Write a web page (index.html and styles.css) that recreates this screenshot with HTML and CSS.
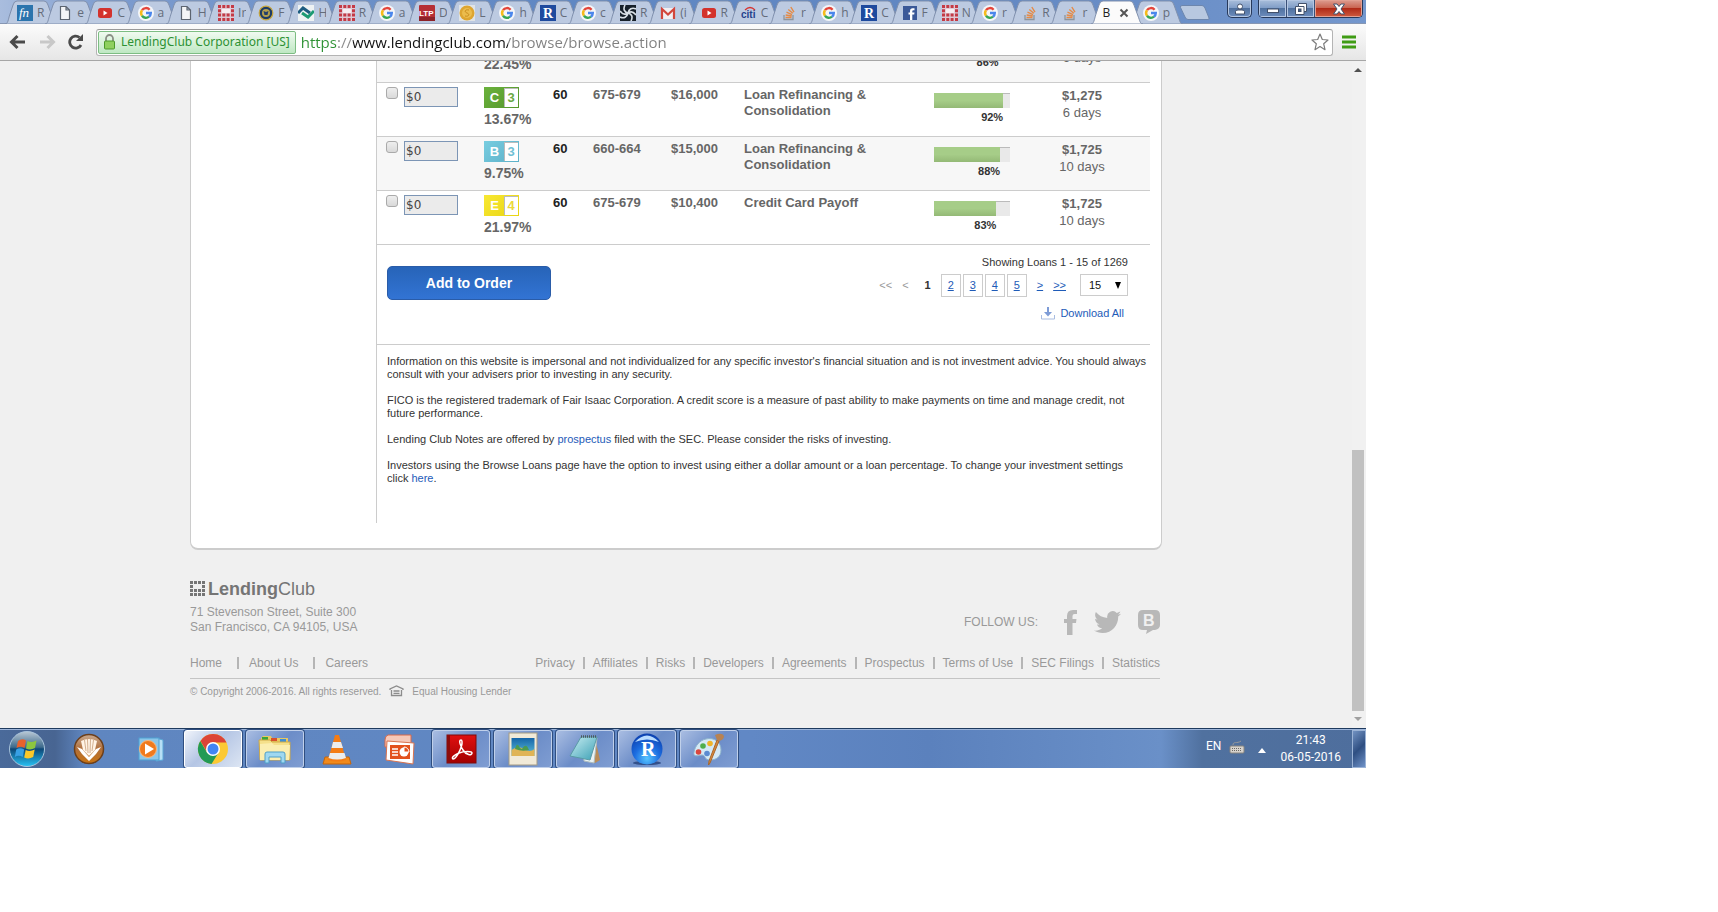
FILE: index.html
```html
<!DOCTYPE html>
<html lang="en">
<head>
<meta charset="utf-8">
<meta name="viewport" content="width=device-width, initial-scale=1">
<title>Browse Loans</title>
<link rel="stylesheet" href="styles.css">
</head>
<body>
<svg class="sprite" width="0" height="0" aria-hidden="true">
  <defs>
    <linearGradient id="orb" x1="0" y1="0" x2="0" y2="1"><stop offset="0" stop-color="#b9c8d4"/><stop offset=".45" stop-color="#3d6a8c"/><stop offset=".5" stop-color="#0d4777"/><stop offset="1" stop-color="#27c3f5"/></linearGradient>
    <linearGradient id="bronze" x1="0" y1="0" x2="0" y2="1"><stop offset="0" stop-color="#c9ab92"/><stop offset=".5" stop-color="#b06f3b"/><stop offset="1" stop-color="#c9730f"/></linearGradient>
    <linearGradient id="redbook" x1="0" y1="0" x2="0" y2="1"><stop offset="0" stop-color="#e01010"/><stop offset="1" stop-color="#a30000"/></linearGradient>
    <radialGradient id="blueball" cx=".5" cy=".8" r=".8"><stop offset="0" stop-color="#58c6ff"/><stop offset=".5" stop-color="#1c6de0"/><stop offset="1" stop-color="#0c3fae"/></radialGradient>
    <linearGradient id="pad" x1="0" y1="0" x2="1" y2="1"><stop offset="0" stop-color="#c9eef2"/><stop offset="1" stop-color="#3a9fb4"/></linearGradient>
    <linearGradient id="sky" x1="0" y1="0" x2="0" y2="1"><stop offset="0" stop-color="#1565a8"/><stop offset="1" stop-color="#5fc0dc"/></linearGradient>
  </defs>
</svg>
<svg class="symbols" aria-hidden="true">
  <symbol id="tab-shape" viewBox="0 0 52 24"><path d="M0 24C3 24 3 20 5 14L8 5Q9 1 12 1H39Q42 1 43 5L47 16C49 21 49 24 52 24Z"/></symbol>
  <symbol id="i-google" viewBox="0 0 16 16"><circle cx="8" cy="8" r="8" fill="#f4f6f9"/><g fill="none" stroke-width="2.4"><path d="M4 5.2A4.8 4.8 0 0 1 11.6 4.7" stroke="#e4453a"/><path d="M4 5.2A4.9 4.9 0 0 0 4 10.8" stroke="#f6bb1b"/><path d="M4 10.8A4.8 4.8 0 0 0 11 11.7" stroke="#38a655"/><path d="M8 8H12.8A4.8 4.8 0 0 1 11 11.7" stroke="#4a86ec"/></g></symbol>
  <symbol id="i-doc" viewBox="0 0 16 16"><path d="M3.500 1.500H9L12.500 5V14.500H3.500ZM9 1.500V5H12.500" fill="#f4f5f7" stroke="#5c6470" stroke-width="1.200"/></symbol>
  <symbol id="i-youtube" viewBox="0 0 16 16"><rect x="1" y="3" width="14" height="10" rx="2.500" fill="#d3322c"/><path d="M6.500 5.500V10.500L10.500 8Z" fill="#fff"/></symbol>
  <symbol id="i-dots" viewBox="0 0 16 16"><rect x="0" y="0" width="16" height="16" fill="#dfc9d4"/><g fill="#c33a45"><path d="M0 0h3v3H0zM4.300 0h3v3h-3zM8.600 0h3v3h-3zM13 0h3v3h-3zM0 4.300h3v3H0zM13 4.300h3v3h-3zM0 8.600h3v3H0zM4.300 8.600h3v3h-3zM8.600 8.600h3v3h-3zM13 8.600h3v3h-3zM0 13h3v3H0zM4.300 13h3v3h-3zM8.600 13h3v3h-3zM13 13h3v3h-3z"/></g><rect x="3.800" y="4" width="8.500" height="4" fill="#f6edf0"/></symbol>
  <symbol id="i-fn" viewBox="0 0 16 16"><rect width="16" height="16" fill="#2b74ad"/><text x="2" y="12" font-family="Liberation Serif, serif" font-style="italic" font-size="13" fill="#fff">fn</text></symbol>
  <symbol id="i-seal" viewBox="0 0 16 16"><circle cx="8" cy="8" r="6.800" fill="#1d3c66" stroke="#c9a63a" stroke-width="1.200"/><circle cx="8" cy="8" r="4" fill="#b5a14e"/><path d="M5.500 6L8 7L10.500 6L9.500 10H6.500Z" fill="#24406b"/></symbol>
  <symbol id="i-waves" viewBox="0 0 16 16"><rect width="16" height="16" fill="#eef2f3"/><path d="M0 8L5 3L12 8" fill="none" stroke="#1d5c80" stroke-width="3"/><path d="M4 8L10 12L16 6" fill="none" stroke="#1c9a73" stroke-width="3"/></symbol>
  <symbol id="i-ltp" viewBox="0 0 16 16"><rect width="16" height="16" rx="1" fill="#b52f35"/><rect y="12" width="16" height="4" fill="#8d2228"/><text x="0" y="11" font-family="Liberation Sans, sans-serif" font-weight="bold" font-size="8" fill="#fff">LTP</text></symbol>
  <symbol id="i-coin" viewBox="0 0 16 16"><rect width="16" height="16" fill="#dfe3e6"/><circle cx="8" cy="8" r="7.500" fill="#dda531"/><circle cx="8" cy="8" r="5" fill="#ebbc4d"/><path d="M10 5C6 4 5 7 8 8S10 12 6 11" fill="none" stroke="#c98c1d"/></symbol>
  <symbol id="i-r" viewBox="0 0 16 16"><rect width="16" height="16" fill="#1e4a9e"/><text x="3" y="13" font-family="Liberation Serif, serif" font-weight="bold" font-size="14" fill="#fff">R</text></symbol>
  <symbol id="i-spiral" viewBox="0 0 16 16"><rect width="16" height="16" fill="#16202a"/><g fill="none" stroke="#d9e0e6" stroke-width="1.600"><path d="M8 8C4 7 3 4 5 0M8 8C9 4 12 2 16 4M8 8C12 9 13 12 11 16M8 8C7 12 4 14 0 12M8 8C5 10 2 9 0 6M8 8C11 6 14 7 16 10"/></g></symbol>
  <symbol id="i-gmail" viewBox="0 0 16 16"><rect x="1" y="3" width="14" height="11" fill="#f1eff2"/><path d="M2 14V4L8 9.500L14 4V14" fill="none" stroke="#d2463c" stroke-width="2.200"/></symbol>
  <symbol id="i-citi" viewBox="0 0 16 16"><text x="0" y="13" font-family="Liberation Sans, sans-serif" font-weight="bold" font-size="10" fill="#24418c">citi</text><path d="M4 5Q9 0 14 5" fill="none" stroke="#d7322e" stroke-width="1.200"/></symbol>
  <symbol id="i-stack" viewBox="0 0 16 16"><path d="M3 10V14.500H12V10" fill="none" stroke="#8e959c" stroke-width="1.300"/><path d="M4.500 12.500H10.500M4.700 10L10.700 11M5.500 7.200L11 9.600M7.300 4.500L11.800 8.300M9.800 2L13 7.200" stroke="#e58a45" stroke-width="1.400"/></symbol>
  <symbol id="i-facebook" viewBox="0 0 16 16"><rect x="1" y="1" width="14" height="14" fill="#3b5998"/><path d="M8 15V9.500H6.500V7.500H8V6Q8 3.200 10.700 3.200H12.500V5.300H11.300Q10.300 5.300 10.300 6.300V7.500H12.500L12.200 9.500H10.300V15Z" fill="#fff"/></symbol>
</svg>

<div class="desktop">
  <header class="browser">
    <div class="strip">
      <ul class="tabs">
        <li><button class="tab"><svg class="shape"><use href="#tab-shape"/></svg><svg class="fav"><use href="#i-fn"/></svg><span>R</span></button></li>
        <li><button class="tab"><svg class="shape"><use href="#tab-shape"/></svg><svg class="fav"><use href="#i-doc"/></svg><span>e</span></button></li>
        <li><button class="tab"><svg class="shape"><use href="#tab-shape"/></svg><svg class="fav"><use href="#i-youtube"/></svg><span>C</span></button></li>
        <li><button class="tab"><svg class="shape"><use href="#tab-shape"/></svg><svg class="fav"><use href="#i-google"/></svg><span>a</span></button></li>
        <li><button class="tab"><svg class="shape"><use href="#tab-shape"/></svg><svg class="fav"><use href="#i-doc"/></svg><span>H</span></button></li>
        <li><button class="tab"><svg class="shape"><use href="#tab-shape"/></svg><svg class="fav"><use href="#i-dots"/></svg><span>Ir</span></button></li>
        <li><button class="tab"><svg class="shape"><use href="#tab-shape"/></svg><svg class="fav"><use href="#i-seal"/></svg><span>F</span></button></li>
        <li><button class="tab"><svg class="shape"><use href="#tab-shape"/></svg><svg class="fav"><use href="#i-waves"/></svg><span>H</span></button></li>
        <li><button class="tab"><svg class="shape"><use href="#tab-shape"/></svg><svg class="fav"><use href="#i-dots"/></svg><span>R</span></button></li>
        <li><button class="tab"><svg class="shape"><use href="#tab-shape"/></svg><svg class="fav"><use href="#i-google"/></svg><span>a</span></button></li>
        <li><button class="tab"><svg class="shape"><use href="#tab-shape"/></svg><svg class="fav"><use href="#i-ltp"/></svg><span>D</span></button></li>
        <li><button class="tab"><svg class="shape"><use href="#tab-shape"/></svg><svg class="fav"><use href="#i-coin"/></svg><span>L</span></button></li>
        <li><button class="tab"><svg class="shape"><use href="#tab-shape"/></svg><svg class="fav"><use href="#i-google"/></svg><span>h</span></button></li>
        <li><button class="tab"><svg class="shape"><use href="#tab-shape"/></svg><svg class="fav"><use href="#i-r"/></svg><span>C</span></button></li>
        <li><button class="tab"><svg class="shape"><use href="#tab-shape"/></svg><svg class="fav"><use href="#i-google"/></svg><span>c</span></button></li>
        <li><button class="tab"><svg class="shape"><use href="#tab-shape"/></svg><svg class="fav"><use href="#i-spiral"/></svg><span>R</span></button></li>
        <li><button class="tab"><svg class="shape"><use href="#tab-shape"/></svg><svg class="fav"><use href="#i-gmail"/></svg><span>(i</span></button></li>
        <li><button class="tab"><svg class="shape"><use href="#tab-shape"/></svg><svg class="fav"><use href="#i-youtube"/></svg><span>R</span></button></li>
        <li><button class="tab"><svg class="shape"><use href="#tab-shape"/></svg><svg class="fav"><use href="#i-citi"/></svg><span>C</span></button></li>
        <li><button class="tab"><svg class="shape"><use href="#tab-shape"/></svg><svg class="fav"><use href="#i-stack"/></svg><span>r</span></button></li>
        <li><button class="tab"><svg class="shape"><use href="#tab-shape"/></svg><svg class="fav"><use href="#i-google"/></svg><span>h</span></button></li>
        <li><button class="tab"><svg class="shape"><use href="#tab-shape"/></svg><svg class="fav"><use href="#i-r"/></svg><span>C</span></button></li>
        <li><button class="tab"><svg class="shape"><use href="#tab-shape"/></svg><svg class="fav"><use href="#i-facebook"/></svg><span>F</span></button></li>
        <li><button class="tab"><svg class="shape"><use href="#tab-shape"/></svg><svg class="fav"><use href="#i-dots"/></svg><span>N</span></button></li>
        <li><button class="tab"><svg class="shape"><use href="#tab-shape"/></svg><svg class="fav"><use href="#i-google"/></svg><span>r</span></button></li>
        <li><button class="tab"><svg class="shape"><use href="#tab-shape"/></svg><svg class="fav"><use href="#i-stack"/></svg><span>R</span></button></li>
        <li><button class="tab"><svg class="shape"><use href="#tab-shape"/></svg><svg class="fav"><use href="#i-stack"/></svg><span>r</span></button></li>
        <li class="active"><button class="tab"><svg class="shape"><use href="#tab-shape"/></svg><span>B</span><svg class="close" viewBox="0 0 10 10"><path d="M1.500 1.500L8.500 8.500M8.500 1.500L1.500 8.500"/></svg></button></li>
        <li><button class="tab"><svg class="shape"><use href="#tab-shape"/></svg><svg class="fav"><use href="#i-google"/></svg><span>p</span></button></li>
      </ul>
      <button class="newtab" aria-label="New tab"><svg width="32" height="16" viewBox="0 0 32 16"><path d="M1.500 2.500Q1 .5 3 .5H23Q25 .5 26 3L30 13Q30.500 14.500 29 14.500H9Q7 14.500 6 12Z" fill="#b8c8e0" stroke="#6d86ad"/></svg></button>
      <div class="window-buttons">
        <button class="wb user" aria-label="User"><svg width="12" height="12" viewBox="0 0 12 12"><circle cx="6" cy="3.500" r="2.500"/><path d="M1.500 11V8.500Q1.500 7 4 7H8Q10.500 7 10.500 8.500V11Z"/></svg></button>
        <div class="wgroup">
          <button class="wb" aria-label="Minimize"><svg width="12" height="12" viewBox="0 0 12 12"><rect x=".5" y="6" width="11" height="3.500"/></svg></button>
          <button class="wb" aria-label="Restore"><svg width="12" height="12" viewBox="0 0 12 12"><path d="M3.500 .5H11.500V8.500H9V11.500H.5V3.500H3.500Z"/><path d="M3.500 3.500H9V8.500" fill="none"/><rect x="3.500" y="6" width="2.500" height="2.500" fill="#3e5f8d"/></svg></button>
          <button class="wb shut" aria-label="Close window"><svg width="14" height="12" viewBox="0 0 14 12"><path d="M1.500 1H5L7 3.500L9 1H12.500L9 6L12.500 11H9L7 8.500L5 11H1.500L5 6Z"/></svg></button>
        </div>
      </div>
    </div>
    <div class="toolbar">
      <button aria-label="Back"><svg width="18" height="16" viewBox="0 0 18 16"><path d="M16 8H3M8.500 2L2.500 8L8.500 14" fill="none" stroke="#4a4a4a" stroke-width="3"/></svg></button>
      <button aria-label="Forward"><svg width="18" height="16" viewBox="0 0 18 16"><path d="M2 8H15M9.500 2L15.500 8L9.500 14" fill="none" stroke="#c8c8c8" stroke-width="3"/></svg></button>
      <button aria-label="Reload"><svg width="18" height="16" viewBox="0 0 18 16"><path d="M14 11A6 6 0 1 1 12.500 3.500" fill="none" stroke="#4a4a4a" stroke-width="2.800"/><path d="M16 0V7H9Z" fill="#4a4a4a"/></svg></button>
      <div class="omnibox">
        <button class="secure"><svg width="13" height="16" viewBox="0 0 13 16"><path d="M3 8V4.500A3.500 3.500 0 0 1 10 4.500V8" fill="none" stroke="#8a8f86" stroke-width="1.800"/><rect x="1.500" y="7" width="10" height="8" rx="1" fill="#8fd05f" stroke="#4c9a2a"/></svg><span>LendingClub Corporation [US]</span></button>
        <input class="url" type="text" aria-label="Address" value="https://www.lendingclub.com/browse/browse.action">
        <button class="star" aria-label="Bookmark"><svg width="18" height="18" viewBox="0 0 18 18"><path d="M9 1L11.300 6.500L17 7L12.700 10.800L14 16.700L9 13.500L4 16.700L5.300 10.800L1 7L6.700 6.500Z" fill="#fff" stroke="#7c7c7c" stroke-width="1.200" stroke-linejoin="round"/></svg></button>
      </div>
      <button class="menu" aria-label="Menu"><svg width="14" height="14" viewBox="0 0 14 14"><path d="M0 2H14M0 7H14M0 12H14" stroke="#3f9c14" stroke-width="3"/></svg></button>
    </div>
  </header>

  <div class="viewport">
    <div class="page">
      <main class="card">
        <div class="listing">
          <table class="loans">
            <colgroup><col class="c-invest"><col class="c-rate"><col class="c-term"><col class="c-fico"><col class="c-amount"><col class="c-purpose"><col class="c-funded"><col class="c-left"></colgroup>
            <tbody>
              <tr class="alt"><td></td><td><div class="grade"></div><div class="rate">22.45%</div></td><td></td><td></td><td></td><td></td><td><div class="bar"></div><div class="pct" style="width:85%">86%</div></td><td class="left"><b>&nbsp;</b>6 days</td></tr>
              <tr><td><div class="invest"><input type="checkbox" aria-label="Select loan, grade C3"><input type="text" value="$0" aria-label="Amount, grade C3"></div></td><td><div class="grade g-c"><b>C</b><i>3</i></div><div class="rate">13.67%</div></td><td class="term">60</td><td>675-679</td><td>$16,000</td><td class="purpose">Loan Refinancing &amp; Consolidation</td><td><div class="bar"><div class="fill" style="width:91%"></div></div><div class="pct" style="width:91%">92%</div></td><td class="left"><b>$1,275</b>6 days</td></tr>
              <tr class="alt"><td><div class="invest"><input type="checkbox" aria-label="Select loan, grade B3"><input type="text" value="$0" aria-label="Amount, grade B3"></div></td><td><div class="grade g-b"><b>B</b><i>3</i></div><div class="rate">9.75%</div></td><td class="term">60</td><td>660-664</td><td>$15,000</td><td class="purpose">Loan Refinancing &amp; Consolidation</td><td><div class="bar"><div class="fill" style="width:87%"></div></div><div class="pct" style="width:87%">88%</div></td><td class="left"><b>$1,725</b>10 days</td></tr>
              <tr><td><div class="invest"><input type="checkbox" aria-label="Select loan, grade E4"><input type="text" value="$0" aria-label="Amount, grade E4"></div></td><td><div class="grade g-e"><b>E</b><i>4</i></div><div class="rate">21.97%</div></td><td class="term">60</td><td>675-679</td><td>$10,400</td><td class="purpose">Credit Card Payoff</td><td><div class="bar"><div class="fill" style="width:82%"></div></div><div class="pct" style="width:82%">83%</div></td><td class="left"><b>$1,725</b>10 days</td></tr>
            </tbody>
          </table>
          <div class="actions">
            <button class="order">Add to Order</button>
            <div class="paging">
              <div>Showing Loans 1 - 15 of 1269</div>
              <nav class="pager" aria-label="Pages">
                <span class="off">&lt;&lt;</span><span class="off">&lt;</span><b>1</b>
                <span class="nums"><a href="#2">2</a><a href="#3">3</a><a href="#4">4</a><a href="#5">5</a></span>
                <a href="#next">&gt;</a><a href="#last">&gt;&gt;</a>
                <span class="size"><select aria-label="Loans per page"><option>15</option></select><svg width="6" height="7" viewBox="0 0 6 7"><path d="M0 0H6L3 7Z"/></svg></span>
              </nav>
              <a class="download" href="#download"><svg width="14" height="13" viewBox="0 0 14 13"><path d="M.5 8V12H13.500V8" fill="none" stroke="#a9bce0"/><path d="M7 0V6" stroke="#7d9bd6" stroke-width="2"/><path d="M3 5H11L7 9.500Z" fill="#7d9bd6"/></svg>Download All</a>
            </div>
          </div>
          <div class="legal">
            <p>Information on this website is impersonal and not individualized for any specific investor's financial situation and is not investment advice. You should always consult with your advisers prior to investing in any security.</p>
            <p>FICO is the registered trademark of Fair Isaac Corporation. A credit score is a measure of past ability to make payments on time and manage credit, not future performance.</p>
            <p>Lending Club Notes are offered by <a href="#prospectus">prospectus</a> filed with the SEC. Please consider the risks of investing.</p>
            <p>Investors using the Browse Loans page have the option to invest using either a dollar amount or a loan percentage. To change your investment settings click&nbsp;<a href="#here">here</a>.</p>
          </div>
        </div>
      </main>
      <footer class="footer">
        <div class="row top">
          <div>
            <div class="logo"><svg width="16" height="16" viewBox="0 0 16 16"><path d="M0 0h3v3H0zM4 0h3v3H4zM8 0h3v3H8zM12 0h3v3h-3zM0 4h3v3H0zM12 4h3v3h-3zM0 8h3v3H0zM4 8h3v3H4zM8 8h3v3H8zM12 8h3v3h-3zM0 12h3v3H0zM4 12h3v3H4zM8 12h3v3H8zM12 12h3v3h-3z" fill="#757575"/></svg><span><b>Lending</b>Club</span></div>
            <address>71 Stevenson Street, Suite 300<br>San Francisco, CA 94105, USA</address>
          </div>
          <div class="follow">
            <span>FOLLOW US:</span>
            <a href="#facebook" aria-label="Facebook"><svg width="13" height="25" viewBox="0 0 13 25"><path d="M3 25V13H0V9H3V6Q3 0 9 0H13V4H10.500Q8.500 4 8.500 6V9H12.500L12 13H8.500V25Z"/></svg></a>
            <a href="#twitter" aria-label="Twitter"><svg width="27" height="23" viewBox="0 0 27 23"><path d="M27 2.700C26 3.200 25 3.500 23.800 3.600C25 2.900 25.900 1.800 26.300 .5C25.200 1.200 24 1.600 22.800 1.900A5.600 5.600 0 0 0 13.300 7C8.700 6.800 4.600 4.500 1.900 1.100C.4 3.600 1.100 6.900 3.600 8.500C2.700 8.500 1.800 8.200 1.100 7.800C1.100 10.400 2.900 12.700 5.500 13.300C4.700 13.500 3.800 13.600 3 13.400C3.700 15.700 5.800 17.300 8.200 17.300C5.900 19.100 3 19.900 0 19.600C2.500 21.200 5.400 22.100 8.500 22.100C18.800 22.100 24.500 13.500 24.200 5.400C25.300 4.700 26.200 3.700 27 2.700Z"/></svg></a>
            <a href="#blog" aria-label="Blog"><svg width="22" height="24" viewBox="0 0 22 24"><path d="M5 0H17Q22 0 22 5V15Q22 19 17 20H15L8 24L9 20H5Q0 20 0 15V5Q0 0 5 0Z"/><text x="5" y="16" font-family="Liberation Sans, sans-serif" font-weight="bold" font-size="16" class="blog-b">B</text></svg></a>
          </div>
        </div>
        <div class="row links">
          <nav class="nav-a" aria-label="Company"><a href="#home">Home</a><a href="#about">About Us</a><a href="#careers">Careers</a></nav>
          <nav class="nav-b" aria-label="Legal"><a href="#privacy">Privacy</a><a href="#affiliates">Affiliates</a><a href="#risks">Risks</a><a href="#developers">Developers</a><a href="#agreements">Agreements</a><a href="#prospectus">Prospectus</a><a href="#terms">Terms of Use</a><a href="#sec">SEC Filings</a><a href="#stats">Statistics</a></nav>
        </div>
        <div class="copyright"><span>© Copyright 2006-2016. All rights reserved.</span><svg width="15" height="12" viewBox="0 0 15 12"><path d="M1 5V4L7.500 1L14 4V5M2.500 5V10.500H12.500V5M4.500 6H10.500M4.500 8.300H10.500" fill="none" stroke="#8c8c8c" stroke-width="1.300"/></svg><span>Equal Housing Lender</span></div>
      </footer>
    </div>
    <div class="scrollbar"><svg width="8" height="4" viewBox="0 0 8 4"><path d="M0 4L4 0L8 4Z" fill="#505050"/></svg><div class="thumb"></div><svg width="8" height="4" viewBox="0 0 8 4"><path d="M0 0L4 4L8 0Z" fill="#a0a0a0"/></svg></div>
  </div>

  <div class="taskbar">
    <div class="apps">
      <button class="start" aria-label="Start"><svg width="38" height="38" viewBox="0 0 38 38"><circle cx="19" cy="19" r="17.500" fill="url(#orb)" stroke="#a9c4dc"/><path d="M10 11Q14 8 18 10.500L16.500 18Q12.500 15.500 8.500 18Z" fill="#e8622c"/><path d="M19.500 11Q24 13 28.500 10.500L27 18Q22.500 20.500 18 18.500Z" fill="#8cc63f"/><path d="M8.200 19.500Q12 17 16.200 19.500L14.700 27Q10.500 24.500 6.800 27Z" fill="#38a0e4"/><path d="M17.700 20Q22 22 26.700 19.500L25.200 27Q20.500 29.500 16.200 27.500Z" fill="#fcc829"/></svg></button>
      <button class="app" aria-label="Reader"><svg width="32" height="32" viewBox="0 0 32 32"><circle cx="16" cy="16" r="14.500" fill="url(#bronze)" stroke="#6b3f1c" stroke-width="1.500"/><path d="M8 8Q16 4 24 8L22 17L16 23L10 17Z" fill="#fff4e6"/><path d="M11.500 7L13 18M14.500 6L15 20M17.500 6L17 20M20.500 7L19 18" stroke="#d3b090"/><path d="M4 14L9 16L16 24L23 16L28 14L23 21L16 28L9 21Z" fill="#fff"/></svg></button>
      <button class="app" aria-label="Media player"><svg width="30" height="32" viewBox="0 0 30 32"><path d="M20 5L27 7V27L20 28Z" fill="#b7dff5" stroke="#5ba6d6"/><rect x="3" y="5" width="20" height="22" fill="#8cc6e8" stroke="#4f9fd1"/><circle cx="12" cy="16" r="8.500" fill="#f07a1d" stroke="#f9b77b"/><path d="M9 10.500V21.500L18 16Z" fill="#fff"/></svg></button>
      <button class="app open current" aria-label="Chrome"><svg width="32" height="32" viewBox="0 0 32 32"><circle cx="16" cy="16" r="15" fill="#fcc934"/><path d="M16 1A15 15 0 0 1 29.500 9.500H16L10 19L3.500 8A15 15 0 0 1 16 1Z" fill="#dc4437"/><path d="M3.200 8A15 15 0 0 0 14.500 31L21 20.500L10.300 20Z" fill="#239a55"/><circle cx="16" cy="16" r="7" fill="#fff"/><circle cx="16" cy="16" r="5.500" fill="#4285f4"/></svg></button>
      <button class="app open" aria-label="Explorer"><svg width="34" height="32" viewBox="0 0 34 32"><path d="M3 5L5 3H13L14 5H30V9H3Z" fill="#e9c860"/><path d="M4 4h6v3H4z" fill="#3aa53a"/><path d="M13 5h6v3h-6z" fill="#d8502c"/><path d="M22 6h6v3h-6z" fill="#3f8fd4"/><path d="M1 7H12L14 9H32V27H2Z" fill="#f5e08a" stroke="#cfa944"/><path d="M2 11L14 10L16 12H32L31 27H2Z" fill="#fbeeb0"/><path d="M7 30V21Q7 19 9 19H25Q27 19 27 21V30H23V24H11V30Z" fill="#9fd8f0" stroke="#4f9fc8"/></svg></button>
      <button class="app" aria-label="VLC"><svg width="30" height="32" viewBox="0 0 30 32"><path d="M3 24H27L29 31H1Z" fill="#f08a1c" stroke="#c5650a"/><path d="M13 2H17L24 27Q15 30 6 27Z" fill="#f47c14"/><path d="M11 9H19L21 15H9.500ZM8 20H22.500L24 25Q15 28 6.500 25Z" fill="#ececec"/></svg></button>
      <button class="app" aria-label="PowerPoint"><svg width="32" height="32" viewBox="0 0 32 32"><path d="M5 2H28V14H2V7Q2 3 5 2Z" fill="#f6c8b8" stroke="#d8694a"/><path d="M4 8L31 10L30 31L3 27Z" fill="#fff" stroke="#d9734f"/><rect x="7" y="12" width="20" height="14" fill="#e2511d"/><path d="M9 16H15M9 19H15M9 22H15" stroke="#fff" stroke-width="1.500"/><circle cx="21" cy="19" r="4.500" fill="#fff"/><path d="M21 19V14A5 5 0 0 1 26 19Z" fill="#e2511d" stroke="#fff"/></svg></button>
      <button class="app open" aria-label="Adobe Reader"><svg width="32" height="32" viewBox="0 0 32 32"><rect x="2" y="2" width="29" height="28" fill="url(#redbook)" stroke="#7e0a0a"/><path d="M2 2H5V30H2Z" fill="#8c0c0c"/><path d="M16 7C13 7 16 14 18 17C21 22 27 23 27 20C27 18 19 18 14 20C9 22 6 25 8 26C11 26 15 18 16.500 13C17.500 9 17 7 16 7Z" fill="none" stroke="#fff" stroke-width="1.500"/></svg></button>
      <button class="app open" aria-label="Photos"><svg width="30" height="34" viewBox="0 0 30 34"><rect x="1" y="1" width="28" height="32" fill="#f1ead8" stroke="#a49b84"/><rect x="3.500" y="6" width="23" height="18" fill="url(#sky)"/><path d="M3.500 18Q10 13 16 17T26.500 17V24H3.500Z" fill="#e0b455"/><path d="M7 17Q9 9 12 16L14 17Q18 10 21 18Q14 20 7 17Z" fill="#4b9a52"/></svg></button>
      <button class="app open" aria-label="Notepad"><svg width="32" height="32" viewBox="0 0 32 32"><path d="M26 5L31 27L26 30L20 28Z" fill="#b98c58"/><path d="M13 5L28 5L25 30L15 28Z" fill="#eaf3f4" stroke="#aebdc0"/><path d="M12 4H28L21 27L1 23Z" fill="url(#pad)" stroke="#5a9aa6"/><path d="M12 3.500H28" stroke="#4d5a5e" stroke-width="2.500" stroke-dasharray="1 1"/></svg></button>
      <button class="app open" aria-label="R"><svg width="34" height="34" viewBox="0 0 34 34"><ellipse cx="17" cy="31" rx="14" ry="2" fill="#33508a"/><circle cx="17" cy="17" r="15.500" fill="url(#blueball)"/><path d="M5 10Q17 -3 29 10Q17 5 5 10Z" fill="#b9dcff"/><text x="11" y="24" font-family="Liberation Serif, serif" font-size="20" font-weight="bold" fill="#fff">R</text></svg></button>
      <button class="app open" aria-label="Paint"><svg width="34" height="34" viewBox="0 0 34 34"><path d="M14 7C22 5 29 10 29 18C29 25 24 28 18 28C12 28 14 23 10 23C5 24 1 25 2 20C3 14 8 8 14 7Z" fill="#d4e9f5" stroke="#8eb3cc"/><circle cx="6.500" cy="20" r="2.800" fill="#d9463e"/><circle cx="11" cy="14" r="2.800" fill="#4fae4c"/><circle cx="18" cy="11.500" r="2.800" fill="#f0b429"/><circle cx="15" cy="21.500" r="2.800" fill="#5b8bd0"/><path d="M27 9L18 31L16.500 33L17 29L25 8Z" fill="#d98a3c" stroke="#a8662a"/><path d="M23 3Q30 0 32 4Q32 8 27 9L25 8Z" fill="#b78252"/></svg></button>
    </div>
    <div class="tray">
      <span class="lang">EN</span>
      <svg width="16" height="14" viewBox="0 0 16 14"><path d="M4 5C4 1 8 4 12 1" fill="none" stroke="#999"/><rect x="1" y="6" width="14" height="7" rx="1" fill="#d7d3cd" stroke="#88857f"/><path d="M3 8.500H13M3 10.500H13" stroke="#6b6964" stroke-dasharray="1 1"/></svg>
      <svg width="8" height="5" viewBox="0 0 8 5"><path d="M0 5L4 0L8 5Z" fill="#fff"/></svg>
      <time class="clock">21:43<br>06-05-2016</time>
    </div>
    <button class="peek" aria-label="Show desktop"></button>
  </div>
</div>
</body>
</html>
```

FILE: styles.css
```css
* { box-sizing: border-box; }
body { margin: 0; background: #fff; font-family: "Liberation Sans", Arial, sans-serif; }
button { border: 0; padding: 0; background: none; font: inherit; color: inherit; }
a { color: #1e5bb8; text-decoration: none; }
ul, p { margin: 0; padding: 0; list-style: none; }
svg { display: block; flex: none; }
.sprite { position: absolute; }
.symbols { display: none; }
.desktop { max-width: 1366px; overflow: hidden; }

/* Browser window */
.strip { display: flex; height: 24px; padding-left: 5px; background: linear-gradient(90deg, #a9bdde, #7c9bce 8%, #5f87c3 40%, #6187c2 70%, #7497cd); border-bottom: 1px solid #8797b3; }
.tabs { flex: 0 1 1166px; min-width: 0; display: grid; grid-template-columns: repeat(29, 1fr); }
.tabs li { position: relative; min-width: 0; }
.tab { position: relative; display: flex; align-items: center; gap: 4px; height: 24px; padding: 2px 0 0 12px; }
.shape { position: absolute; left: 0; top: 0; width: 52px; height: 24px; fill: #bccae1; stroke: #8090ad; stroke-width: 1; }
.fav { position: relative; width: 16px; height: 16px; stroke: none; }
.tab span { position: relative; width: 8px; overflow: hidden; white-space: nowrap; text-align: left; font: 12px/16px "Open Sans", "Noto Sans", sans-serif; color: #646c7a; }
.active { z-index: 1; }
.active .shape { fill: #fbfbfb; }
.active .tab { gap: 8px; }
.active .tab span { color: #222; }
.close { position: relative; width: 10px; height: 10px; fill: none; stroke: #555; stroke-width: 2; }
.newtab { margin: 5px 0 0 8px; align-self: flex-start; }
.window-buttons { display: flex; gap: 6px; margin-left: auto; padding-right: 3px; align-items: flex-start; }
.wgroup { display: flex; border: 1px solid #27395a; border-top: 0; border-radius: 0 0 5px 5px; overflow: hidden; }
.wb { display: flex; align-items: center; justify-content: center; width: 28px; height: 17px; background: linear-gradient(#a9bedb, #7f9cc6 48%, #50719f 50%, #6d8dbd); border-right: 1px solid #3a5078; box-shadow: inset 0 0 0 1px #b5c7e2; fill: #fff; stroke: #42506a; }
.wb.user { width: 25px; height: 18px; border: 1px solid #27395a; border-top: 0; border-radius: 0 0 5px 5px; }
.wb.shut { width: 47px; border: 0; background: linear-gradient(#dd9d90, #c8614e 48%, #b02a17 50%, #cf5c40); box-shadow: inset 0 0 0 1px #e2a092; }
.toolbar { display: flex; align-items: center; gap: 11px; height: 37px; padding: 0 8px 0 9px; background: linear-gradient(#fbfbfb, #e6e6e6); border-bottom: 1px solid #a6a6a6; }
.omnibox { flex: 1; min-width: 0; display: flex; align-items: center; height: 27px; padding: 0 3px 0 1px; background: #fff; border: 1px solid #b4b4b4; border-top-color: #999; border-radius: 3px; }
.secure { display: flex; align-items: center; gap: 5px; height: 23px; padding: 0 5px 0 4px; border: 1px solid #7dbd83; border-radius: 2px; background: linear-gradient(#f0faf0, #bfe8c3); color: #2d9133; font: 12px/18px "Noto Sans", sans-serif; white-space: nowrap; }
.url { flex: 1; min-width: 0; border: 0; outline: 0; padding: 0; margin-left: 5px; font: 15px/22px "Open Sans", "Noto Sans", sans-serif; color: transparent; background: linear-gradient(90deg, #2d9133 36px, #888 36px 52px, #111 52px 207px, #808080 207px); -webkit-background-clip: text; background-clip: text; }
.menu { margin: 0 2px 0 -2px; }

/* Page */
.viewport { display: flex; overflow: hidden; background: #f0f0f0; }
.page { flex: 1; min-width: 0; }
.card { max-width: 972px; margin: -34px auto 0; padding: 0 11px 25px 185px; background: #fff; border: 1px solid #ccc; border-bottom-width: 2px; border-radius: 8px; }
.listing { border-left: 1px solid #ccc; }
.loans { width: 100%; table-layout: fixed; border-collapse: collapse; font-size: 13px; line-height: 16px; color: #666; font-weight: bold; }
.c-invest { width: 107px; } .c-rate { width: 69px; } .c-term { width: 40px; } .c-fico { width: 78px; } .c-amount { width: 73px; } .c-purpose { width: 190px; } .c-funded { width: 76px; }
.loans tr { height: 54px; border-bottom: 1px solid #ccc; }
.loans td { padding: 4px 0 0; vertical-align: top; }
.alt { background: #f7f7f7; }
.invest { display: flex; gap: 6px; padding-left: 9px; }
.invest [type="checkbox"] { appearance: none; width: 12px; height: 12px; margin: 0; border: 1px solid #aaa; border-radius: 3px; background: linear-gradient(#eee, #d9d9d9); }
.invest [type="text"] { width: 54px; height: 20px; padding: 0 1px; border: 1px solid #7c95b5; background: #ebebeb; color: #444; font: 12px/16px "DejaVu Sans", sans-serif; }
.grade { display: flex; width: 35px; height: 21px; padding: 1px; line-height: 19px; color: #fff; }
.grade b { flex: 1; text-align: center; }
.grade i { width: 14px; background: #fff; text-align: center; font-style: normal; box-shadow: inset 1px 1px #bbb; }
.g-c { background: linear-gradient(135deg, #6ab13c, #55952c); } .g-c i { color: #6aa843; }
.g-b { background: linear-gradient(135deg, #78cde0, #5cb0c8); } .g-b i { color: #6fbfd4; }
.g-e { background: linear-gradient(135deg, #f8e833, #e8d413); } .g-e i { color: #ecd93a; }
.rate { padding-top: 3px; font-size: 14px; line-height: 16px; }
.term { color: #222; }
.loans .purpose { padding-right: 60px; }
.bar { height: 15px; margin-top: 6px; background: #e9e9e9; border-top: 1px solid #bbb; }
.fill { height: 15px; margin-top: -1px; background: linear-gradient(#a6cd88 50%, #94b976); }
.pct { font-size: 11px; line-height: 18px; text-align: right; color: #333; }
.loans .left { padding-left: 4px; text-align: center; font-weight: normal; line-height: 17px; }
.left b { display: block; }

.actions { display: flex; justify-content: space-between; align-items: flex-start; padding: 10px 22px 23px 10px; border-bottom: 1px solid #ccc; }
.order { width: 164px; height: 34px; margin-top: 11px; border: 1px solid #2a5ca8; border-radius: 5px; background: linear-gradient(#2764b8, #3274d4); color: #fff; font-size: 14px; font-weight: bold; }
.paging { display: flex; flex-direction: column; align-items: flex-end; font-size: 11px; line-height: 15px; color: #333; }
.pager { display: flex; align-items: center; gap: 10px; margin: 4px 0 9px; }
.pager a { text-decoration: underline; }
.pager b { margin-left: 6px; }
.off { color: #999; }
.nums { display: flex; gap: 2px; }
.nums a { width: 20px; height: 23px; line-height: 21px; text-align: center; border: 1px solid #ccc; }
.size { position: relative; margin-left: 4px; }
.size select { appearance: none; width: 48px; height: 22px; padding: 0 8px; border: 1px solid #ccc; border-radius: 0; background: #fff; font: 11px "Liberation Sans", sans-serif; color: #111; }
.size svg { position: absolute; right: 7px; top: 8px; }
.download { display: flex; align-items: center; gap: 5px; margin-right: 4px; }
.legal { padding: 10px 0 38px 10px; font-size: 11px; line-height: 13px; color: #333; }
.legal p + p { margin-top: 13px; }

/* Footer */
.footer { max-width: 972px; margin: 0 auto; padding: 29px 2px 29px 0; color: #999; font-size: 12px; line-height: 15px; }
.footer a { color: #999; }
.row { display: flex; justify-content: space-between; }
.logo { display: flex; align-items: center; gap: 2px; font-size: 18px; line-height: 20px; color: #757575; }
address { margin-top: 6px; font-style: normal; }
.follow { display: flex; align-items: center; padding-top: 31px; gap: 17px; fill: #b8b8b8; }
.follow span { margin-right: 9px; }
.blog-b { fill: #f0f0f0; }
.links { margin-top: 11px; padding: 11px 0 9px; border-bottom: 1px solid #c4c4c4; }
.links nav { display: flex; line-height: 12px; }
.links a + a { border-left: 2px solid #b5b5b5; }
.links .nav-a a { padding: 0 15px 0 10px; }
.links .nav-b a { padding: 0 8px; }
.links .nav-a a:first-child { padding-left: 0; }
.links .nav-b a:last-child { padding-right: 0; }
.copyright { display: flex; align-items: center; gap: 8px; margin-top: 5px; font-size: 10px; }
.scrollbar { width: 14px; display: flex; flex-direction: column; align-items: flex-start; padding: 7px 0; background: #f1f1f1; }
.scrollbar svg { margin-left: 2px; }
.thumb { width: 12px; height: 40%; margin: auto 0 6px; background: #c1c1c1; }

/* Taskbar */
.taskbar { display: flex; height: 40px; border-top: 1px solid #1e3a5e; box-shadow: inset 0 1px #9db5da; background: linear-gradient(90deg, #4a6a9a 0, #486592 55px, #5f86c0 85px, #6188c5 55%, #5b81bd 68%, #6a90c8 85%, #50719f 88%, #4e6e9d); }
.apps { display: flex; align-items: center; gap: 4px; padding-top: 1px; }
.start { width: 56px; padding-left: 8px; }
.app { width: 58px; height: 38px; display: flex; align-items: center; justify-content: center; }
.open { border: 1px solid #c0d0ea; border-radius: 3px; background: linear-gradient(135deg, #a9bde2, #6c8dc8 50%, #7f9dd2); box-shadow: 0 0 0 1px #2f4e80; }
.current { border-color: #fff; background: linear-gradient(135deg, #f0f4fb, #b4c5e4 45%, #dce5f3); }
.tray { display: flex; align-items: center; margin-left: auto; padding-top: 2px; color: #fff; font: 12px/17px Roboto, "Noto Sans", sans-serif; }
.lang { margin: -6px 8px 0 0; }
.tray svg { margin-top: -4px; }
.tray svg + svg { margin: 2px 14px 0 13px; }
.clock { text-align: center; margin-right: 11px; }
.peek { width: 14px; margin-top: 1px; border: 1px solid #9bb3d6; background: linear-gradient(135deg, #7292c2, #2f4f82 50%, #6f92c8); }
```
